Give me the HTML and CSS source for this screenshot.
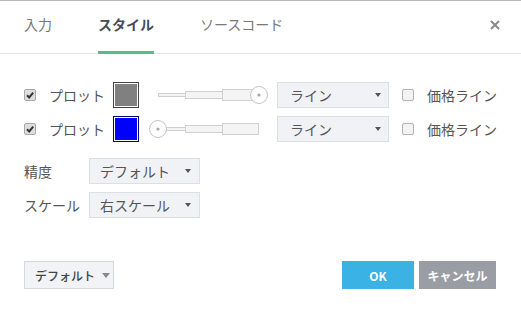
FILE: index.html
```html
<!DOCTYPE html>
<html lang="ja">
<head>
    <meta charset="UTF-8">
    <title>スタイル</title>
    <link rel="stylesheet" href="styles.css">
</head>
<body>
    <div class="dialog">
        <div class="tabs">
            <div class="tab">入力</div>
            <div class="tab active">スタイル</div>
            <div class="tab">ソースコード</div>
            <div class="close">
                <svg width="10" height="10" viewBox="0 0 10 10"><path d="M1 1L9 9M9 1L1 9" stroke="#8a8a8a" stroke-width="2"/></svg>
            </div>
        </div>

        <div class="content">
            <div class="plot-row">
                <span class="check checked"><svg width="10" height="10" viewBox="0 0 10 10"><path d="M2 5.2L4.2 7.4L8.2 2.6" stroke="#333" stroke-width="2" fill="none"/></svg></span>
                <span class="plot-label">プロット</span>
                <span class="swatch gray"><span></span></span>
                <svg class="width-slider" width="120" height="26" viewBox="0 0 120 26">
                    <rect x="9.5" y="11.5" width="27" height="3" fill="#f4f4f4" stroke="#d0d0d0"/>
                    <rect x="36.5" y="9.5" width="37" height="7" fill="#f4f4f4" stroke="#d0d0d0"/>
                    <rect x="73.5" y="7.5" width="33" height="11" fill="#f4f4f4" stroke="#d0d0d0"/>
                    <circle cx="110" cy="13" r="8.5" fill="#fff" stroke="#c4c4c4"/>
                    <circle cx="110" cy="13" r="1.6" fill="#a8a8a8"/>
                </svg>
                <div class="select line-select"><span>ライン</span><i class="caret"></i></div>
                <span class="check"></span>
                <span class="price-label">価格ライン</span>
            </div>
            <div class="plot-row">
                <span class="check checked"><svg width="10" height="10" viewBox="0 0 10 10"><path d="M2 5.2L4.2 7.4L8.2 2.6" stroke="#333" stroke-width="2" fill="none"/></svg></span>
                <span class="plot-label">プロット</span>
                <span class="swatch blue"><span></span></span>
                <svg class="width-slider" width="120" height="26" viewBox="0 0 120 26">
                    <rect x="17.5" y="11.5" width="19" height="3" fill="#f4f4f4" stroke="#d0d0d0"/>
                    <rect x="36.5" y="9.5" width="37" height="7" fill="#f4f4f4" stroke="#d0d0d0"/>
                    <rect x="73.5" y="7.5" width="36" height="11" fill="#f4f4f4" stroke="#d0d0d0"/>
                    <circle cx="9" cy="13" r="8.5" fill="#fff" stroke="#c4c4c4"/>
                    <circle cx="9" cy="13" r="1.6" fill="#a8a8a8"/>
                </svg>
                <div class="select line-select"><span>ライン</span><i class="caret"></i></div>
                <span class="check"></span>
                <span class="price-label">価格ライン</span>
            </div>

            <div class="field-row first">
                <span class="field-label">精度</span>
                <div class="select field-select"><span>デフォルト</span><i class="caret"></i></div>
            </div>
            <div class="field-row">
                <span class="field-label">スケール</span>
                <div class="select field-select"><span>右スケール</span><i class="caret"></i></div>
            </div>
        </div>

        <div class="footer">
            <div class="default-btn">デフォルト <i class="caret big"></i></div>
            <div class="buttons">
                <button class="ok">OK</button>
                <button class="cancel">キャンセル</button>
            </div>
        </div>
    </div>
</body>
</html>
```

FILE: styles.css
```css
body {
    margin: 0;
    background: #fff;
    font-family: "Noto Sans CJK JP", "Noto Sans", sans-serif;
    font-size: 14px;
    color: #555;
}
.dialog {
    width: 521px;
    height: 313px;
    border-top: 1px solid #b8b8b8;
    box-sizing: border-box;
}
.tabs {
    display: flex;
    align-items: flex-start;
    height: 52px;
    padding-left: 24px;
    border-bottom: 1px solid #e2e2e2;
}
.tab {
    height: 53px;
    margin-bottom: -1px;
    margin-right: 46px;
    box-sizing: border-box;
    padding-bottom: 5px;
    border-bottom: 3px solid transparent;
    display: flex;
    align-items: center;
    font-size: 14px;
    color: #787878;
}
.tab.active {
    border-bottom-color: #5bb98c;
    color: #474c58;
    font-weight: bold;
}
.close {
    display: flex;
    margin-left: auto;
    margin-right: 21px;
    margin-top: 19px;
}
.content {
    padding: 28px 0 0 24px;
}
.plot-row, .field-row {
    display: flex;
    align-items: center;
    height: 26px;
    margin-bottom: 8px;
}
.field-row.first {
    margin-top: 16px;
}
.check {
    width: 12px;
    height: 12px;
    box-sizing: border-box;
    border: 1px solid #b4b4b4;
    border-radius: 2px;
    background: #f2f2f2;
    display: flex;
    align-items: center;
    justify-content: center;
}
.check.checked {
    background: #dedede;
    border-color: #a8a8a8;
}
.plot-label {
    margin-left: 13px;
    width: 64px;
}
.swatch {
    width: 26px;
    height: 26px;
    box-sizing: border-box;
    border: 1px solid #444;
    padding: 1px;
    background: #fff;
}
.swatch span {
    display: block;
    width: 100%;
    height: 100%;
}
.swatch.gray span {
    background: #808080;
}
.swatch.blue {
    border-color: #00007a;
}
.swatch.blue span {
    background: #0000ff;
}
.width-slider {
    margin-left: 10px;
}
.select {
    display: flex;
    align-items: center;
    justify-content: space-between;
    height: 26px;
    box-sizing: border-box;
    background: #f0f2f5;
    border: 1px solid #dcdfe3;
    color: #555;
}
.line-select {
    width: 112px;
    margin-left: 8px;
    margin-right: 13px;
    padding: 0 7px 0 12px;
}
.price-label {
    margin-left: 13px;
}
.caret {
    width: 0;
    height: 0;
    border-left: 3px solid transparent;
    border-right: 3px solid transparent;
    border-top: 4px solid #555;
}
.field-label {
    width: 65px;
}
.field-select {
    width: 111px;
    padding: 0 8px 0 10px;
}
.footer {
    display: flex;
    justify-content: space-between;
    align-items: center;
    padding: 0 25px 0 24px;
    margin-top: 43px;
}
.default-btn {
    width: 90px;
    height: 28px;
    box-sizing: border-box;
    background: #f2f3f6;
    border: 1px solid #d5d8dc;
    display: flex;
    align-items: center;
    padding-left: 10px;
    font-size: 12px;
    font-weight: 500;
    color: #444;
}
.caret.big {
    margin-left: 7px;
    border-left-width: 4px;
    border-right-width: 4px;
    border-top-width: 5px;
    border-top-color: #888;
}
.buttons {
    display: flex;
    gap: 5px;
}
button {
    height: 28px;
    border: none;
    color: #fff;
    font-family: inherit;
    font-size: 12px;
    font-weight: bold;
    padding: 0;
}
.ok {
    width: 72px;
    background: #3bb2e4;
}
.cancel {
    width: 77px;
    background: #9b9da4;
}
```
